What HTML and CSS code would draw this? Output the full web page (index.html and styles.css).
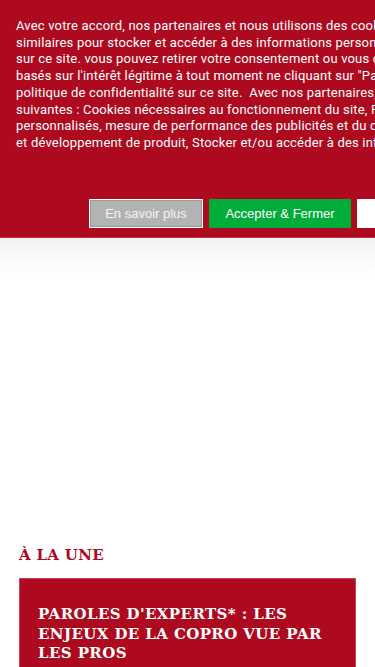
FILE: index.html
```html
<!DOCTYPE html>
<html lang="fr">
<head>
    <meta charset="UTF-8">
    <title>À la une</title>
    <meta name="viewport" content="width=device-width, initial-scale=1.0">
    <link rel="stylesheet" href="styles.css">
</head>
<body>
    <div class="consent">
        <p class="consent-text">
            Avec votre accord, nos partenaires et nous utilisons des cookies ou technologies<br>
            similaires pour stocker et accéder à des informations personnelles comme votre visite<br>
            sur ce site. vous pouvez retirer votre consentement ou vous opposer aux traitements<br>
            basés sur l'intérêt légitime à tout moment ne cliquant sur "Paramétrer" ou dans notre<br>
            politique de confidentialité sur ce site.&nbsp; Avec nos partenaires, nous traitons les données<br>
            suivantes : Cookies nécessaires au fonctionnement du site, Publicités et contenu<br>
            personnalisés, mesure de performance des publicités et du contenu, données d'audience<br>
            et développement de produit, Stocker et/ou accéder à des informations sur un appareil
        </p>
        <div class="consent-buttons">
            <button class="btn btn-more">En savoir plus</button>
            <button class="btn btn-accept">Accepter &amp; Fermer</button>
            <button class="btn btn-settings">Paramétrer</button>
        </div>
    </div>
    <div class="header-shadow"></div>

    <main>
        <section class="une">
            <h2 class="une-title">À la une</h2>
            <article class="une-card">
                <h3 class="une-card__title">Paroles d'experts* : les enjeux de la copro vue par les pros</h3>
            </article>
        </section>
    </main>
</body>
</html>
```

FILE: styles.css
```css
body {
    margin: 0;
    width: 375px;
    height: 667px;
    overflow: hidden;
    background: #fff;
    font-family: Roboto, 'Liberation Sans', sans-serif;
}

.consent {
    background: #ad0a1f;
    height: 238px;
    box-sizing: border-box;
    border-bottom: 1px solid #c53349;
    width: 700px;
    padding: 18px 16px 0;
}

.consent-text {
    margin: 0;
    color: #fff;
    font-size: 13px;
    line-height: 16.7px;
    letter-spacing: 0.18px;
    white-space: nowrap;
}

.consent-buttons {
    display: flex;
    gap: 6px;
    margin-top: 47px;
    padding-left: 73px;
}

.btn {
    font-family: 'Liberation Sans', Arial, sans-serif;
    font-size: 13px;
    height: 29px;
    padding: 0 15px;
    border: 1px solid #fff;
    cursor: pointer;
}
.btn-more {
    background: #b3b3b3;
    color: #f4f4f4;
    width: 114px;
    box-shadow: inset 0 0 0 1px #9a9a9a;
}
.btn-accept {
    background: #00ad3b;
    color: #fff;
    border-color: #00ad3b;
    width: 142px;
}
.btn-settings {
    background: #fff;
    color: #222;
    width: 120px;
}

.header-shadow {
    height: 36px;
    background: linear-gradient(#f2f2f2, #fff);
}

main {
    padding: 271px 19px 0;
}

.une-title {
    margin: 0 0 13px;
    color: #ad0a1f;
    font-family: 'DejaVu Serif', serif;
    font-size: 15px;
    font-weight: bold;
    text-transform: uppercase;
    letter-spacing: 0.3px;
    line-height: 20px;
}

.une-card {
    background: #ad0a1f;
    border: 1px solid #c9445a;
    padding: 26px 18px 20px;
}

.une-card__title {
    margin: 0;
    color: #fff;
    font-family: 'DejaVu Serif', serif;
    font-size: 15px;
    font-weight: bold;
    text-transform: uppercase;
    line-height: 19.5px;
    letter-spacing: 0.4px;
}
```
